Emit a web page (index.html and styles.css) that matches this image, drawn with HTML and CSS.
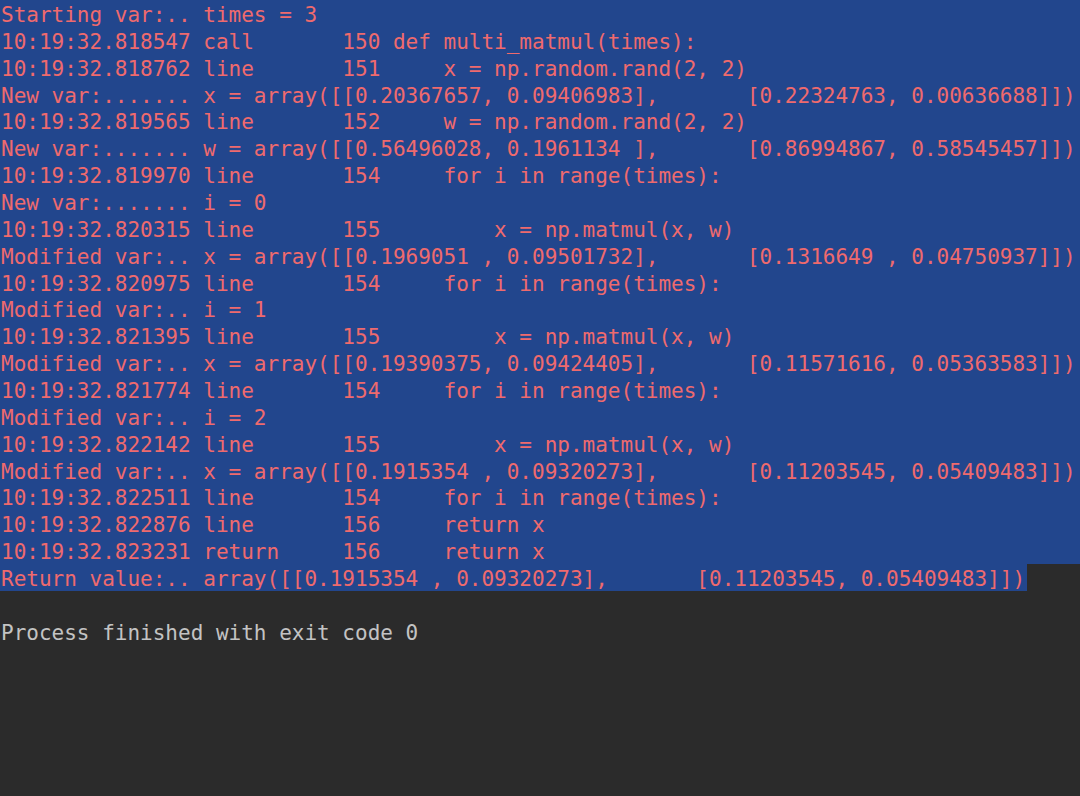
FILE: index.html
```html
<!DOCTYPE html>
<html>
<head>
<meta charset="utf-8">
<link rel="stylesheet" href="styles.css">
</head>
<body>
<div class="console">
<div class="sel">
<div class="ln">Starting var:.. times = 3</div>
<div class="ln">10:19:32.818547 call       150 def multi_matmul(times):</div>
<div class="ln">10:19:32.818762 line       151     x = np.random.rand(2, 2)</div>
<div class="ln">New var:....... x = array([[0.20367657, 0.09406983],       [0.22324763, 0.00636688]])</div>
<div class="ln">10:19:32.819565 line       152     w = np.random.rand(2, 2)</div>
<div class="ln">New var:....... w = array([[0.56496028, 0.1961134 ],       [0.86994867, 0.58545457]])</div>
<div class="ln">10:19:32.819970 line       154     for i in range(times):</div>
<div class="ln">New var:....... i = 0</div>
<div class="ln">10:19:32.820315 line       155         x = np.matmul(x, w)</div>
<div class="ln">Modified var:.. x = array([[0.1969051 , 0.09501732],       [0.1316649 , 0.04750937]])</div>
<div class="ln">10:19:32.820975 line       154     for i in range(times):</div>
<div class="ln">Modified var:.. i = 1</div>
<div class="ln">10:19:32.821395 line       155         x = np.matmul(x, w)</div>
<div class="ln">Modified var:.. x = array([[0.19390375, 0.09424405],       [0.11571616, 0.05363583]])</div>
<div class="ln">10:19:32.821774 line       154     for i in range(times):</div>
<div class="ln">Modified var:.. i = 2</div>
<div class="ln">10:19:32.822142 line       155         x = np.matmul(x, w)</div>
<div class="ln">Modified var:.. x = array([[0.1915354 , 0.09320273],       [0.11203545, 0.05409483]])</div>
<div class="ln">10:19:32.822511 line       154     for i in range(times):</div>
<div class="ln">10:19:32.822876 line       156     return x</div>
<div class="ln">10:19:32.823231 return     156     return x</div>
</div>
<div class="ln last"><span class="sel-part">Return value:.. array([[0.1915354 , 0.09320273],       [0.11203545, 0.05409483]])</span></div>
<div class="ln blank"> </div>
<div class="ln plain">Process finished with exit code 0</div>
</div>
</body>
</html>
```
FILE: styles.css
```css
html, body {
  margin: 0;
  padding: 0;
  background: #2b2b2b;
  width: 1080px;
  height: 796px;
  overflow: hidden;
}
.console {
  font-family: "DejaVu Sans Mono", "Liberation Mono", monospace;
  font-size: 21px;
  color: #ef6a6d;
}
.sel {
  background: #22468d;
}
.ln {
  white-space: pre;
  box-sizing: border-box;
  height: 26.86px;
  line-height: 22.86px;
  padding-top: 4px;
  padding-left: 1px;
}
.last {
  padding-top: 0;
}
.sel-part {
  display: inline-block;
  box-sizing: border-box;
  background: #22468d;
  margin-left: -1px;
  padding-left: 1px;
  padding-right: 2px;
  padding-top: 4px;
  height: 26.86px;
}
.plain {
  color: #c3c3c3;
}
```
